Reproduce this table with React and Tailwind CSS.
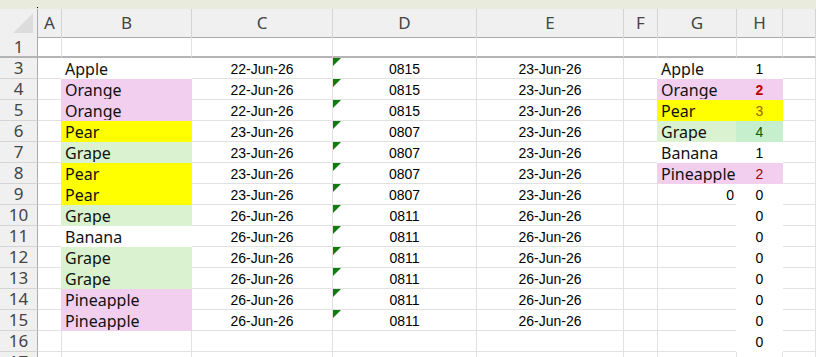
import React from 'react';

const GRID = 'grid grid-cols-[38px_24px_130px_141px_144px_147px_34px_79px_46px_1fr]';

// fill -> background, own borders and a 1px cover over the left gridline
const FILL = {
  white: 'relative z-10 bg-white border-white shadow-[-1px_0_0_#ffffff]',
  pink: 'relative z-10 bg-[#f2cfee] border-[#f2cfee] shadow-[-1px_0_0_#f2cfee]',
  yellow: 'relative z-10 bg-[#ffff00] border-[#ffff00] shadow-[-1px_0_0_#ffff00]',
  green: 'relative z-10 bg-[#daf2d0] border-[#daf2d0] shadow-[-1px_0_0_#daf2d0]',
  mint: 'relative z-10 bg-[#c6efce] border-[#c6efce] shadow-[-1px_0_0_#c6efce]',
};

const fruitFill = { Apple: 'white', Banana: 'white', Orange: 'pink', Pineapple: 'pink', Pear: 'yellow', Grape: 'green' };

const rows = [
  { n: 3, b: 'Apple', c: '22-Jun-26', d: '0815', e: '23-Jun-26', g: 'Apple', gf: 'white', h: '1', hf: 'white' },
  { n: 4, b: 'Orange', c: '22-Jun-26', d: '0815', e: '23-Jun-26', g: 'Orange', gf: 'pink', h: '2', hf: 'pink', hc: 'text-[#c00000] font-bold' },
  { n: 5, b: 'Orange', c: '22-Jun-26', d: '0815', e: '23-Jun-26', g: 'Pear', gf: 'yellow', h: '3', hf: 'yellow', hc: 'text-[#9c6500]' },
  { n: 6, b: 'Pear', c: '23-Jun-26', d: '0807', e: '23-Jun-26', g: 'Grape', gf: 'green', h: '4', hf: 'mint', hc: 'text-[#006100]' },
  { n: 7, b: 'Grape', c: '23-Jun-26', d: '0807', e: '23-Jun-26', g: 'Banana', gf: 'white', h: '1', hf: 'white' },
  { n: 8, b: 'Pear', c: '23-Jun-26', d: '0807', e: '23-Jun-26', g: 'Pineapple', gf: 'pink', h: '2', hf: 'pink', hc: 'text-[#9c0006]' },
  { n: 9, b: 'Pear', c: '23-Jun-26', d: '0807', e: '23-Jun-26', gNum: '0', h: '0', hf: 'white' },
  { n: 10, b: 'Grape', c: '26-Jun-26', d: '0811', e: '26-Jun-26', h: '0', hf: 'white' },
  { n: 11, b: 'Banana', c: '26-Jun-26', d: '0811', e: '26-Jun-26', h: '0', hf: 'white' },
  { n: 12, b: 'Grape', c: '26-Jun-26', d: '0811', e: '26-Jun-26', h: '0', hf: 'white' },
  { n: 13, b: 'Grape', c: '26-Jun-26', d: '0811', e: '26-Jun-26', h: '0', hf: 'white' },
  { n: 14, b: 'Pineapple', c: '26-Jun-26', d: '0811', e: '26-Jun-26', h: '0', hf: 'white' },
  { n: 15, b: 'Pineapple', c: '26-Jun-26', d: '0811', e: '26-Jun-26', h: '0', hf: 'white' },
  { n: 16, h: '0', hf: 'white' },
  { n: 17 },
];

const textFont = "font-['Noto_Sans',sans-serif] text-[16px] text-[#111] pt-[2px]";
const numFont = "font-['Liberation_Sans',Arial,sans-serif] text-[14px] pt-[2px]";

function Cell({ fill, className = '', children }) {
  const look = fill ? FILL[fill] : 'border-[#e1e1e1]';
  return (
    <div className={`h-[21px] border-r border-b ${look} flex items-center overflow-hidden whitespace-nowrap leading-[20px] ${className}`}>
      {children}
    </div>
  );
}

function ErrorMark() {
  return (
    <svg className="absolute left-0 top-0" width="8" height="8" viewBox="0 0 8 8">
      <polygon points="0,0 8,0 0,8" fill="#107c10" />
    </svg>
  );
}

function RowHead({ n }) {
  return (
    <div className="h-[21px] bg-[#f0f0f0] border-r border-b border-r-[#ababab] border-b-[#d4d4d4] flex items-center justify-center font-['Noto_Sans',sans-serif] text-[17px] text-[#444]">
      {n}
    </div>
  );
}

function DataRow({ r }) {
  return (
    <div className={GRID}>
      <RowHead n={r.n} />
      <Cell />
      <Cell fill={r.b ? fruitFill[r.b] : undefined} className={`px-[3px] ${textFont}`}>{r.b}</Cell>
      <Cell className={`justify-center text-black ${numFont}`}>{r.c}</Cell>
      <Cell className={`relative justify-center text-black ${numFont}`}>
        {r.d && <ErrorMark />}
        {r.d}
      </Cell>
      <Cell className={`justify-center text-black ${numFont}`}>{r.e}</Cell>
      <Cell />
      {r.gNum ? (
        <Cell className={`justify-end pr-[2px] text-black ${numFont}`}>{r.gNum}</Cell>
      ) : (
        <Cell fill={r.gf} className={`px-[3px] ${textFont}`}>{r.g}</Cell>
      )}
      <Cell fill={r.hf} className={`justify-center ${numFont} ${r.hc || 'text-black'}`}>{r.h}</Cell>
      <Cell />
    </div>
  );
}

export default function App() {
  const letters = ['A', 'B', 'C', 'D', 'E', 'F', 'G', 'H', ''];
  return (
    <div className="w-[816px] h-[357px] overflow-hidden bg-white">
      {/* ribbon edge */}
      <div className="h-[9px] bg-[#e9ecdc] relative">
        <div className="absolute left-[37px] top-[7px] w-px h-px bg-black" />
      </div>

      {/* column headers */}
      <div className={`${GRID} h-[28px]`}>
        <div className="bg-[#f0f0f0] border-r border-b border-r-[#ababab] border-b-[#ababab] flex items-end justify-end p-[4px]">
          <svg width="20" height="20" viewBox="0 0 20 20">
            <polygon points="20,0 20,20 0,20" fill="#dcdcdc" />
          </svg>
        </div>
        {letters.map((l, i) => (
          <div
            key={i}
            className="bg-[#f0f0f0] border-r border-b border-r-[#d4d4d4] border-b-[#ababab] flex items-center justify-center font-['Noto_Sans',sans-serif] text-[17px] text-[#444]"
          >
            {l}
          </div>
        ))}
      </div>

      {/* row 1, row 2 hidden */}
      <div className={GRID}>
        <div className="h-[21px] bg-[#f0f0f0] border-r border-b-2 border-r-[#ababab] border-b-[#b4b4b4] flex items-center justify-center font-['Noto_Sans',sans-serif] text-[17px] text-[#444]">
          1
        </div>
        {letters.map((l, i) => (
          <div key={i} className="h-[21px] border-r border-b-2 border-r-[#e1e1e1] border-b-[#b4b4b4]" />
        ))}
      </div>

      {rows.map((r) => (
        <DataRow key={r.n} r={r} />
      ))}
    </div>
  );
}
